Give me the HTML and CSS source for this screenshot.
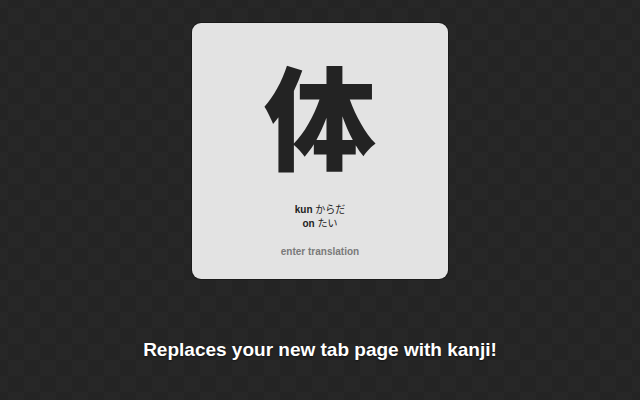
FILE: index.html
```html
<!DOCTYPE html>
<html lang="ja">
<head>
<meta charset="utf-8">
<link rel="stylesheet" href="styles.css">
</head>
<body>
<main class="page">
  <section class="card">
    <div class="kanji">体</div>
    <div class="readings">
      <div class="reading"><span class="label">kun</span> からだ</div>
      <div class="reading"><span class="label">on</span> たい</div>
    </div>
    <div class="translation">enter translation</div>
  </section>
  <p class="tagline">Replaces your new tab page with kanji!</p>
</main>
</body>
</html>
```
FILE: styles.css
```css
html, body {
  margin: 0;
  padding: 0;
  width: 640px;
  height: 400px;
  overflow: hidden;
}
body {
  background-color: #272727;
  background-image: conic-gradient(rgba(0,0,0,0.07) 25%, transparent 0 50%, rgba(0,0,0,0.07) 0 75%, transparent 0);
  background-size: 32px 32px;
  background-position: 8px 8px;
  font-family: "Liberation Sans", "Noto Sans CJK JP", sans-serif;
}
.page {
  display: flex;
  flex-direction: column;
  align-items: center;
  padding-top: 23px;
}
.card {
  box-sizing: border-box;
  width: 256px;
  height: 256px;
  background: #e3e3e3;
  border-radius: 9px;
  box-shadow: 0 0 0 1px #1a1a1a;
  display: flex;
  flex-direction: column;
  align-items: center;
}
.kanji {
  margin-top: 30px;
  font-family: "Noto Sans CJK JP", sans-serif;
  font-weight: 900;
  font-size: 112px;
  line-height: 120px;
  color: #232323;
}
.readings {
  margin-top: 30px;
  text-align: center;
  font-size: 10px;
  line-height: 14px;
  color: #222;
}
.label {
  font-weight: bold;
}
.translation {
  margin-top: 15px;
  font-size: 10px;
  line-height: 12px;
  font-weight: bold;
  color: #7a7a7a;
}
.tagline {
  margin: 60px 0 0;
  color: #ffffff;
  font-weight: bold;
  font-size: 19px;
  line-height: 22px;
  text-shadow: 0 1px 2px rgba(0,0,0,0.5);
}
```
